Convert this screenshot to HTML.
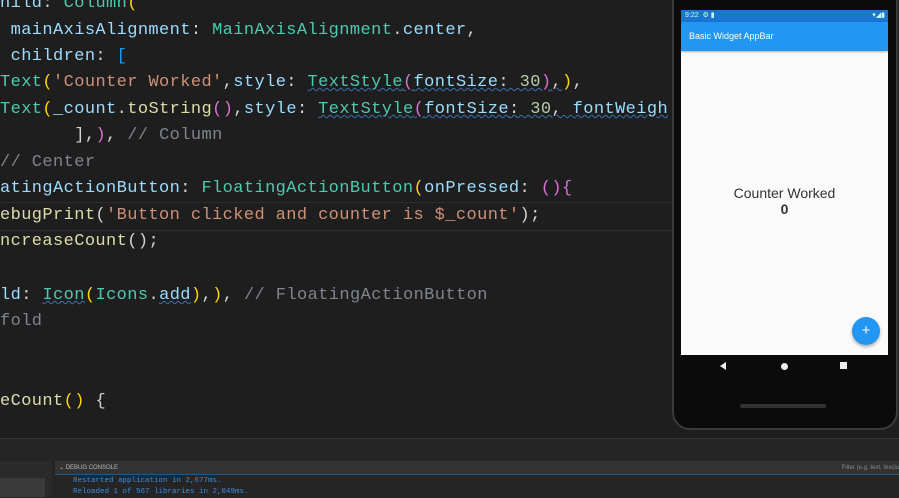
<!DOCTYPE html>
<html><head><style>
body{margin:0;width:899px;height:497px;overflow:hidden;background:#1e1e1e;position:relative;font-family:"Liberation Mono",monospace}
.l{position:absolute;left:0;white-space:pre;font-size:17px;letter-spacing:0.4px;color:#9cdcfe;line-height:20px}
.t{color:#4ec9b0}.s{color:#ce9178}.c{color:#7f848e}.y{color:#ffd700}.p{color:#da70d6}.n{color:#b5cea8}.w{color:#d4d4d4}.b{color:#179fff}
.u{text-decoration:underline wavy #3b6fb0;text-decoration-thickness:1px}
</style></head><body>
<div class="l" style="top:-6px">hild<span class="w">: </span><span class="t">Column</span><span class="y">(</span></div>
<div class="l" style="top:21px"> mainAxisAlignment<span class="w">: </span><span class="t">MainAxisAlignment</span><span class="w">.</span>center<span class="w">,</span></div>
<div class="l" style="top:47px"> children<span class="w">: </span><span class="b">[</span></div>
<div class="l" style="top:73px"><span class="t">Text</span><span class="y">(</span><span class="s">'Counter Worked'</span><span class="w">,</span>style<span class="w">: </span><span class="t u">TextStyle<span class="p">(</span><span style="color:#9cdcfe">fontSize</span><span class="w">: </span><span class="n">30</span><span class="p">)</span><span class="w">,</span></span><span class="y">)</span><span class="w">,</span></div>
<div class="l" style="top:100px"><span class="t">Text</span><span class="y">(</span>_count<span class="w">.</span><span style="color:#dcdcaa">toString</span><span class="p">()</span><span class="w">,</span>style<span class="w">: </span><span class="u"><span class="t">TextStyle</span><span class="p">(</span>fontSize<span class="w">: </span><span class="n">30</span><span class="w">, </span>fontWeigh</span></div>
<div class="l" style="top:126px"><span class="w">       ]</span><span class="w">,</span><span class="p">)</span><span class="w">, </span><span class="c">// Column</span></div>
<div class="l" style="top:153px"><span class="c">// Center</span></div>
<div class="l" style="top:179px">atingActionButton<span class="w">: </span><span class="t">FloatingActionButton</span><span class="y">(</span>onPressed<span class="w">: </span><span class="p">(){</span></div>
<div style="position:absolute;left:0;top:202px;width:672px;height:27px;border-top:1px solid #2c2c2c;border-bottom:1px solid #2c2c2c"></div>
<div class="l" style="top:206px"><span style="color:#dcdcaa">ebugPrint</span><span class="w">(</span><span class="s">'Button clicked and counter is $_count'</span><span class="w">);</span></div>
<div class="l" style="top:232px"><span style="color:#dcdcaa">ncreaseCount</span><span class="w">();</span></div>
<div class="l" style="top:286px">ld<span class="w">: </span><span class="t u">Icon</span><span class="y">(</span><span class="t">Icons</span><span class="w">.</span><span class="u">add</span><span class="y">)</span><span class="w">,</span><span class="y">)</span><span class="w">, </span><span class="c">// FloatingActionButton</span></div>
<div class="l" style="top:312px"><span class="c">fold</span></div>
<div class="l" style="top:392px"><span style="color:#dcdcaa">eCount</span><span class="y">()</span><span class="w"> {</span></div>

<!-- phone -->
<div style="position:absolute;left:672px;top:-20px;width:226px;height:450px;background:#0b0b0b;border-radius:18px;border:2px solid #3a3a3a;box-sizing:border-box"></div>
<div style="position:absolute;left:681px;top:10px;width:207px;height:345px;background:#fafafa;overflow:hidden;font-family:'Liberation Sans',sans-serif">
 <div style="height:12px;background:#1976d2;color:#cfe;font-size:7px;line-height:12px;padding-left:4px">9:22 &nbsp;⚙ ▮<span style="float:right;padding-right:3px">▾◢▮</span></div>
 <div style="height:29px;background:#2196f3;color:#fff;font-size:9px;line-height:28px;padding-left:8px;box-shadow:0 1px 2px rgba(0,0,0,.3)">Basic Widget AppBar</div>
 <div style="position:absolute;top:175px;width:100%;text-align:center;color:#333;font-size:14px;line-height:16px">Counter Worked<br><b style="font-size:14px">0</b></div>
 <div style="position:absolute;left:171px;top:307px;width:28px;height:28px;border-radius:50%;background:#2196f3;color:#fff;text-align:center;line-height:27px;font-size:15px;box-shadow:0 2px 3px rgba(0,0,0,.3)">+</div>
</div>
<div style="position:absolute;left:720px;top:362px;width:0;height:0;border-top:4px solid transparent;border-bottom:4px solid transparent;border-right:6px solid #eee"></div>
<div style="position:absolute;left:781px;top:363px;width:7px;height:7px;border-radius:50%;background:#eee"></div>
<div style="position:absolute;left:840px;top:362px;width:7px;height:7px;background:#eee"></div>
<div style="position:absolute;left:740px;top:404px;width:86px;height:4px;border-radius:2px;background:#333"></div>

<!-- bottom panel -->
<div style="position:absolute;left:0;top:438px;width:899px;height:59px;background:#252526;border-top:1px solid #333"></div>
<div style="position:absolute;left:0;top:461px;width:52px;height:36px;background:#2a2a2b"></div>
<div style="position:absolute;left:0;top:478px;width:45px;height:19px;background:#3a3a3a"></div>
<div style="position:absolute;left:55px;top:461px;width:844px;height:14px;background:#333;border-bottom:1px solid #1e5a8a;font-family:'Liberation Sans',sans-serif;font-size:6px;color:#bbb;line-height:14px;padding-left:4px;box-sizing:border-box">⌄ DEBUG CONSOLE<span style="float:right;color:#888">Filter (e.g. text, !exclu</span></div>
<div style="position:absolute;left:73px;top:476px;font-size:7.5px;color:#3c8ee0;line-height:11px;white-space:pre">Restarted application in 2,677ms.
Reloaded 1 of 567 libraries in 2,049ms.</div>
</body></html>
